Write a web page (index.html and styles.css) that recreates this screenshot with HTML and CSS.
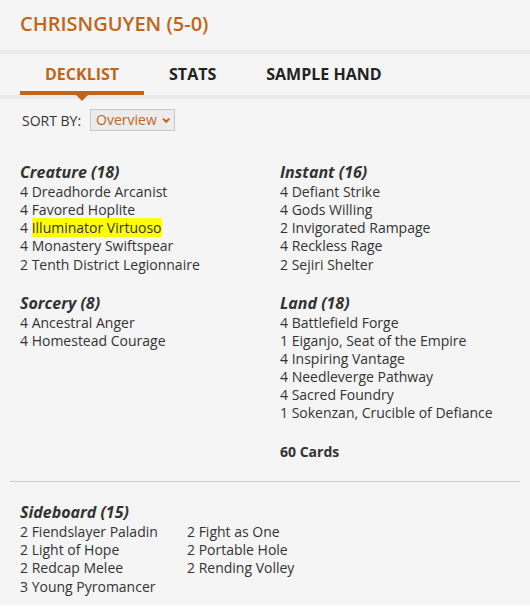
FILE: index.html
```html
<!DOCTYPE html>
<html lang="en">
<head>
<meta charset="utf-8">
<title>Decklist</title>
<link rel="stylesheet" href="styles.css">
</head>
<body>
<div class="page">
  <header class="header">
    <h1 class="title">CHRISNGUYEN (5-0)</h1>
  </header>
  <div class="band"></div>
  <nav class="tabs">
    <div class="tab active">DECKLIST<span class="caret"></span></div>
    <div class="tab">STATS</div>
    <div class="tab">SAMPLE HAND</div>
  </nav>
  <div class="band"></div>
  <div class="sort">
    <span class="sort-label">SORT BY:</span>
    <div class="select">
      <span>Overview</span>
      <svg class="chev" width="10" height="7" viewBox="0 0 10 7"><path d="M1.2 1.2 L5 5 L8.8 1.2" fill="none" stroke="#c2651a" stroke-width="2.4"/></svg>
    </div>
  </div>
  <div class="deck">
    <div class="col">
      <section class="group">
        <h3 class="gh">Creature (18)</h3>
        <div>4 Dreadhorde Arcanist</div>
        <div>4 Favored Hoplite</div>
        <div>4 <span class="hl">Illuminator Virtuoso</span></div>
        <div>4 Monastery Swiftspear</div>
        <div>2 Tenth District Legionnaire</div>
      </section>
      <section class="group">
        <h3 class="gh">Sorcery (8)</h3>
        <div>4 Ancestral Anger</div>
        <div>4 Homestead Courage</div>
      </section>
    </div>
    <div class="col">
      <section class="group">
        <h3 class="gh">Instant (16)</h3>
        <div>4 Defiant Strike</div>
        <div>4 Gods Willing</div>
        <div>2 Invigorated Rampage</div>
        <div>4 Reckless Rage</div>
        <div>2 Sejiri Shelter</div>
      </section>
      <section class="group">
        <h3 class="gh">Land (18)</h3>
        <div>4 Battlefield Forge</div>
        <div>1 Eiganjo, Seat of the Empire</div>
        <div>4 Inspiring Vantage</div>
        <div>4 Needleverge Pathway</div>
        <div>4 Sacred Foundry</div>
        <div>1 Sokenzan, Crucible of Defiance</div>
      </section>
      <div class="total">60 Cards</div>
    </div>
  </div>
  <hr class="divider">
  <section class="side">
    <h3 class="gh">Sideboard (15)</h3>
    <div class="side-cols">
      <div>
        <div>2 Fiendslayer Paladin</div>
        <div>2 Light of Hope</div>
        <div>2 Redcap Melee</div>
        <div>3 Young Pyromancer</div>
      </div>
      <div>
        <div>2 Fight as One</div>
        <div>2 Portable Hole</div>
        <div>2 Rending Volley</div>
      </div>
    </div>
  </section>
</div>
</body>
</html>
```
FILE: styles.css
```css
html, body {
  margin: 0;
  padding: 0;
  background: #ffffff;
}
body {
  font-family: "Open Sans", "Liberation Sans", sans-serif;
  color: #333333;
  font-size: 14px;
}
.page {
  background: #f5f5f5;
  padding-bottom: 9px;
}
.header {
  height: 50px;
  box-sizing: border-box;
  padding: 10px 20px 0;
}
.title {
  margin: 0;
  font-size: 20px;
  line-height: 27px;
  font-weight: 600;
  color: #c2651a;
}
.band {
  height: 4px;
  background: #ebebeb;
}
.tabs {
  display: flex;
  padding-left: 20px;
}
.tab {
  position: relative;
  padding: 9px 25px 6px;
  line-height: 22px;
  font-size: 16px;
  font-weight: 700;
  color: #222222;
  border-bottom: 4px solid transparent;
}
.tab.active {
  color: #c2651a;
  border-bottom-color: #c2651a;
}
.caret {
  position: absolute;
  left: 50%;
  bottom: -10px;
  margin-left: -6px;
  width: 0;
  height: 0;
  border-left: 6.5px solid transparent;
  border-right: 6.5px solid transparent;
  border-top: 6px solid #c2651a;
  z-index: 2;
}
.sort {
  display: flex;
  align-items: center;
  padding: 10px 22px 0;
}
.sort-label {
  font-size: 14px;
  margin-right: 9px;
}
.select {
  display: flex;
  align-items: center;
  box-sizing: border-box;
  height: 22px;
  width: 85px;
  padding: 0 4px 0 5px;
  border: 1px solid #c8c8c8;
  background: #ececec;
  color: #c2651a;
  font-size: 14px;
  line-height: 20px;
}
.select .chev {
  margin-left: 5px;
}
.deck {
  display: grid;
  grid-template-columns: 260px 1fr;
  padding: 31px 20px 0;
}
.group {
  line-height: 1.3;
}
.group + .group {
  margin-top: 19px;
}
.gh {
  margin: 0;
  font-size: 16px;
  font-weight: 700;
  font-style: italic;
  line-height: 1.3;
}
.hl {
  background: #ffff00;
}
.total {
  margin-top: 20px;
  font-weight: 700;
  line-height: 1.3;
}
.divider {
  margin: 20px 10px 0;
  border: 0;
  border-top: 1px solid #cccccc;
  height: 0;
}
.side {
  padding: 20px 20px 0;
  line-height: 1.31;
}
.side-cols {
  display: grid;
  grid-template-columns: 167px 1fr;
}
```
